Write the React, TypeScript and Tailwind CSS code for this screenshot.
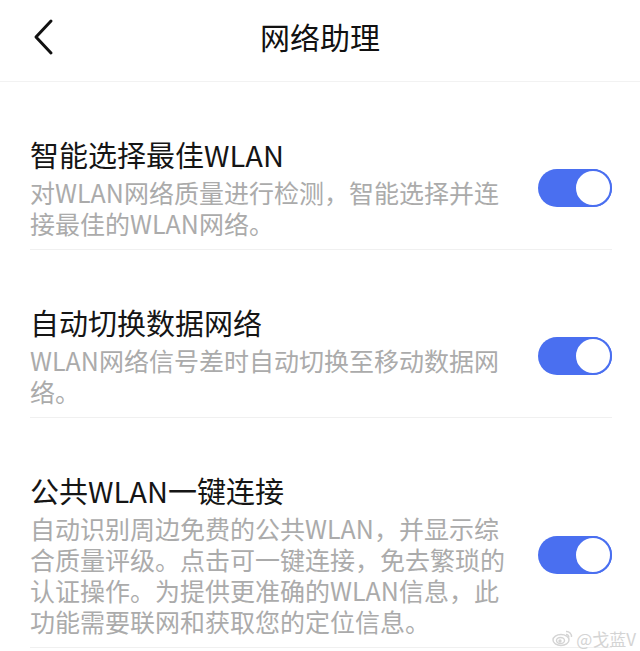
const items = [
  {
    title: "智能选择最佳WLAN",
    lines: ["对WLAN网络质量进行检测，智能选择并连", "接最佳的WLAN网络。"],
  },
  {
    title: "自动切换数据网络",
    lines: ["WLAN网络信号差时自动切换至移动数据网", "络。"],
  },
  {
    title: "公共WLAN一键连接",
    lines: [
      "自动识别周边免费的公共WLAN，并显示综",
      "合质量评级。点击可一键连接，免去繁琐的",
      "认证操作。为提供更准确的WLAN信息，此",
      "功能需要联网和获取您的定位信息。",
    ],
  },
];

function Toggle() {
  return (
    <div className="flex h-[38px] w-[74px] shrink-0 items-center justify-end rounded-full bg-[#4a6ff0]">
      <div className="h-[38px] w-[38px] rounded-full border-[2px] border-[#4a6ff0] bg-white" />
    </div>
  );
}

function WeiboMark() {
  return (
    <svg width="22" height="18" viewBox="0 0 22 18" fill="none" stroke="#d4d4d4" strokeWidth="1.4">
      <ellipse cx="9" cy="11" rx="8" ry="5.5" />
      <ellipse cx="8.5" cy="11.5" rx="4" ry="3" />
      <circle cx="8" cy="12" r="1" fill="#d4d4d4" />
      <path d="M14 2.5a5 5 0 0 1 5.5 5.5" />
      <path d="M14 5.5a2.5 2.5 0 0 1 2.8 2.8" />
    </svg>
  );
}

export default function App() {
  return (
    <div
      className="relative h-[651px] w-[640px] overflow-hidden bg-white"
      style={{ fontFamily: '"Noto Sans CJK SC", "Noto Sans", sans-serif' }}
    >
      <header className="relative flex h-[82px] items-center justify-center border-b border-[#f2f2f2]">
        <svg
          className="absolute left-[30px] top-[18px]"
          width="28"
          height="38"
          viewBox="0 0 28 38"
          fill="none"
          stroke="#111"
          strokeWidth="3"
          strokeLinecap="round"
          strokeLinejoin="round"
        >
          <path d="M21 3 L6 19 L21 35" />
        </svg>
        <h1 className="-mt-[10px] text-[30px] leading-none text-[#111]">网络助理</h1>
      </header>

      <ul>
        {items.map((item) => (
          <li
            key={item.title}
            className="ml-[30px] mr-[28px] flex items-center justify-between border-b border-[#f0f0f0] pb-[10px] pt-[54px]"
          >
            <div className="flex flex-col">
              <h2 className="text-[29px] leading-[36px] text-[#151515]">{item.title}</h2>
              <p className="mt-[5px] text-[25px] leading-[31px] text-[#ababab]">
                {item.lines.map((line) => (
                  <span key={line} className="block whitespace-nowrap">
                    {line}
                  </span>
                ))}
              </p>
            </div>
            <Toggle />
          </li>
        ))}
      </ul>

      <div className="absolute bottom-[4px] right-[4px] flex items-center gap-[2px] text-[17px] leading-none text-[#d4d4d4]">
        <WeiboMark />
        <span>@戈蓝V</span>
      </div>
    </div>
  );
}
